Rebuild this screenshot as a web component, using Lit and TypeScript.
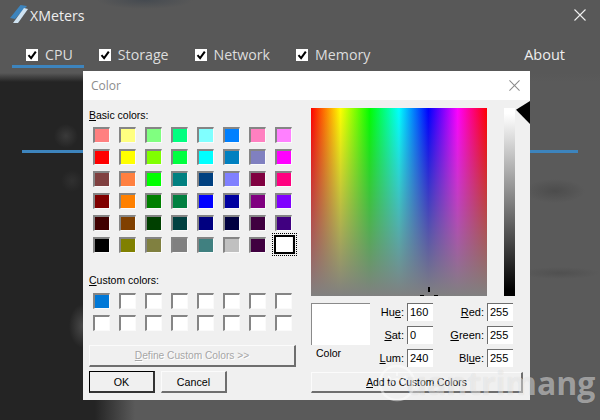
import { LitElement, html, css, svg } from 'lit';
import { customElement } from 'lit/decorators.js';

const TABS = ['CPU', 'Storage', 'Network', 'Memory'];

const BASIC = [
  '#ff8080', '#ffff80', '#80ff80', '#00ff80', '#80ffff', '#0080ff', '#ff80c0', '#ff80ff',
  '#ff0000', '#ffff00', '#80ff00', '#00ff40', '#00ffff', '#0080c0', '#8080c0', '#ff00ff',
  '#804040', '#ff8040', '#00ff00', '#008080', '#004080', '#8080ff', '#800040', '#ff0080',
  '#800000', '#ff8000', '#008000', '#008040', '#0000ff', '#0000a0', '#800080', '#8000ff',
  '#400000', '#804000', '#004000', '#004040', '#000080', '#000040', '#400040', '#400080',
  '#000000', '#808000', '#808040', '#808080', '#408080', '#c0c0c0', '#400040', '#ffffff'
];

const CUSTOM = ['#0078d7', ...Array(15).fill('#ffffff')];

const closeIcon = (size: number) => html`
  <svg width=${size} height=${size} viewBox="0 0 12 12" fill="none" stroke="currentColor" stroke-width="1.1">
    <path d="M.5.5l11 11M11.5.5l-11 11"></path>
  </svg>
`;

const tick = svg`<path d="M2.5 6.2l2.6 3L9.8 2.6" fill="none" stroke="#000" stroke-width="2"></path>`;

@customElement('app-root')
export class AppRoot extends LitElement {
  static styles = css`
    :host {
      display: flex;
      flex-direction: column;
      position: relative;
      width: 600px;
      height: 420px;
      overflow: hidden;
      background: #585858;
      font-family: "Open Sans", sans-serif;
      color: #e8e8e8;
    }
    .titlebar {
      display: flex;
      align-items: center;
      height: 33px;
      padding: 0 14px 3px 10px;
      box-sizing: border-box;
      background: radial-gradient(ellipse 48px 9px at 145px 0, #454a50, transparent);
    }
    .logo {
      width: 19px;
      height: 20px;
      margin-right: 1px;
    }
    .appname {
      font-size: 14.2px;
      flex: 1;
      color: #eeeeee;
    }
    .close {
      display: flex;
      color: #f0f0f0;
    }
    .tabs {
      display: flex;
      align-items: flex-start;
      gap: 1px;
      height: 40px;
      padding: 0 35px 0 12px;
    }
    .tab {
      display: flex;
      align-items: center;
      gap: 7px;
      height: 21px;
      padding: 11px 11px 0 14px;
      font-size: 14.2px;
      color: #dddddd;
      border-bottom: 3px solid transparent;
    }
    .tab.active {
      border-bottom-color: #3d84bd;
    }
    .check {
      width: 12px;
      height: 12px;
      background: #fff;
      flex: none;
    }
    .about {
      margin-left: auto;
      padding-top: 11px;
      line-height: 21px;
      font-size: 14.5px;
      color: #eeeeee;
    }
    .content {
      flex: 1;
      padding: 77px 22px 0;
      background:
        linear-gradient(to bottom, #585858, rgba(88, 88, 88, 0) 9px),
        radial-gradient(circle 12px at 66px 63px, #3a3a3a, transparent),
        radial-gradient(circle 11px at 72px 108px, #303030, transparent),
        radial-gradient(ellipse 14px 22px at 83px 253px, #4a4a4a, transparent),
        radial-gradient(ellipse 30px 12px at 555px 118px, #4c4c4c, transparent),
        radial-gradient(ellipse 40px 6px at 560px 200px, #505050, transparent),
        linear-gradient(to right, #242424 95px, #5a5a5a 135px);
    }
    .meter {
      height: 3px;
      background: #3d84bd;
    }
    .dialog {
      position: absolute;
      left: 83px;
      top: 71px;
      width: 447px;
      height: 329px;
      display: flex;
      flex-direction: column;
      background: #f0f0f0;
      color: #000;
      font-family: "Liberation Sans", Arial, sans-serif;
      font-size: 10.5px;
    }
    .dlg-title {
      display: flex;
      align-items: center;
      justify-content: space-between;
      flex: none;
      height: 29px;
      padding: 0 10px 0 8px;
      background: #fff;
      font-family: "Open Sans", sans-serif;
      font-size: 12px;
      color: #8c8c8c;
    }
    .dlg-title .x {
      display: flex;
      color: #8a8a8a;
    }
    .dlg-body {
      position: relative;
      flex: 1;
      display: flex;
      gap: 15px;
      padding: 8px 6px 0;
    }
    .left {
      width: 207px;
      display: flex;
      flex-direction: column;
    }
    .label {
      line-height: 14px;
      margin-bottom: 5px;
    }
    .label.second {
      margin-top: 20px;
      margin-bottom: 6px;
    }
    u {
      text-underline-offset: 1px;
    }
    .swatches {
      display: grid;
      grid-template-columns: repeat(8, 17px);
      grid-auto-rows: 16px;
      column-gap: 9px;
      row-gap: 6px;
      padding-left: 4px;
    }
    .swatch {
      position: relative;
      box-sizing: border-box;
      border-top: 2px solid #858585;
      border-left: 2px solid #858585;
      border-right: 1px solid #fafafa;
      border-bottom: 1px solid #fafafa;
    }
    .swatch.picked {
      border: 0;
    }
    .swatch.picked::before {
      content: '';
      position: absolute;
      inset: -2px -3px -1px -1px;
      border: 2px solid #000;
    }
    .swatch.picked::after {
      content: '';
      position: absolute;
      inset: -4px -5px -3px -3px;
      border: 1px dotted #000;
    }
    .btn {
      display: flex;
      align-items: center;
      justify-content: center;
      box-sizing: border-box;
      height: 22px;
      border-top: 1px solid #fbfbfb;
      border-left: 1px solid #fbfbfb;
      border-right: 2px solid #6e6e6e;
      border-bottom: 2px solid #6e6e6e;
      font-size: 10.7px;
    }
    .btn.define {
      margin-top: 14px;
      color: #a6a6a6;
      text-shadow: 1px 1px 0 #fff;
      font-size: 10.2px;
    }
    .row {
      display: flex;
      gap: 6px;
      margin-top: 4px;
    }
    .row .btn {
      width: 66px;
    }
    .btn.default {
      border: 1px solid #000;
      border-right: 2px solid #333;
      border-bottom: 2px solid #333;
    }
    .right {
      width: 212px;
      display: flex;
      flex-direction: column;
    }
    .picker {
      display: flex;
      gap: 17px;
      height: 188px;
    }
    .spectrum {
      position: relative;
      width: 176px;
      background:
        linear-gradient(to bottom, rgba(128, 128, 128, 0), #808080),
        linear-gradient(to right, #f00, #ff0, #0f0, #0ff, #00f, #f0f, #f00);
    }
    .cross {
      position: absolute;
      background: #000;
    }
    .cross.v {
      left: 117px;
      top: 179px;
      width: 2px;
      height: 5px;
    }
    .cross.l {
      left: 109px;
      top: 187px;
      width: 4px;
      height: 1px;
    }
    .cross.r {
      left: 123px;
      top: 187px;
      width: 4px;
      height: 1px;
    }
    .lum {
      width: 11px;
      background: linear-gradient(to bottom, #fff 3%, #808080 50%, #000 97%);
    }
    .arrow {
      position: absolute;
      right: 0;
      top: 1px;
      width: 14px;
      height: 23px;
      background: #000;
      clip-path: polygon(0 38%, 100% 0, 100% 100%);
    }
    .controls {
      display: flex;
      margin-top: 7px;
      height: 64px;
    }
    .preview-col {
      width: 59px;
    }
    .preview {
      height: 42px;
      box-sizing: border-box;
      background: #fff;
      border-top: 1px solid #8a8a8a;
      border-left: 1px solid #8a8a8a;
    }
    .preview-label {
      margin: 1px 0 0 5px;
      line-height: 14px;
      font-size: 10.5px;
    }
    .fields {
      display: grid;
      grid-template-columns: 37px 26px 54px 26px;
      grid-auto-rows: 18px;
      row-gap: 5px;
    }
    .fields label {
      text-align: right;
      padding-right: 3px;
      line-height: 18px;
      font-size: 11px;
    }
    .val {
      box-sizing: border-box;
      background: #fff;
      border-top: 1px solid #6e6e6e;
      border-left: 1px solid #6e6e6e;
      padding-left: 2px;
      line-height: 17px;
      font-size: 11px;
    }
    .btn.add {
      margin-top: 5px;
      height: 21px;
      font-size: 10.3px;
    }
    .watermark {
      position: absolute;
      left: 377px;
      top: 363px;
      display: flex;
      align-items: flex-end;
      pointer-events: none;
      color: rgba(255, 255, 255, 0.45);
      font-family: "Open Sans", sans-serif;
      font-weight: 700;
      font-size: 32px;
      line-height: 40px;
      text-shadow: 0 0 1px rgba(0, 0, 0, 0.1);
    }
    .watermark svg {
      width: 40px;
      height: 40px;
      margin-top: -3px;
    }
    .watermark span {
      margin-left: -11px;
    }
  `;

  renderField(name: string, under: number, value: string) {
    return html`
      <label>${name.slice(0, under)}<u>${name[under]}</u>${name.slice(under + 1)}:</label>
      <span class="val">${value}</span>
    `;
  }

  render() {
    return html`
      <div class="titlebar">
        <svg class="logo" viewBox="0 0 19 20">
          <path d="M0 13L10.5 0 17 1 5 14z" fill="#3d84bd"></path>
          <path d="M3 18h5L18 4l-4-1z" fill="#cfe3f2"></path>
        </svg>
        <span class="appname">XMeters</span>
        <span class="close">${closeIcon(12)}</span>
      </div>
      <div class="tabs">
        ${TABS.map((t, i) => html`
          <div class="tab ${i === 0 ? 'active' : ''}">
            <svg class="check" viewBox="0 0 12 12">${tick}</svg>
            <span>${t}</span>
          </div>
        `)}
        <span class="about">About</span>
      </div>
      <div class="content">
        <div class="meter"></div>
      </div>

      <div class="dialog">
        <div class="dlg-title">
          <span>Color</span>
          <span class="x">${closeIcon(11)}</span>
        </div>
        <div class="dlg-body">
          <div class="left">
            <div class="label"><u>B</u>asic colors:</div>
            <div class="swatches">
              ${BASIC.map((c, i) => html`
                <div class="swatch ${i === 47 ? 'picked' : ''}" style="background:${c}"></div>
              `)}
            </div>
            <div class="label second"><u>C</u>ustom colors:</div>
            <div class="swatches">
              ${CUSTOM.map(c => html`<div class="swatch" style="background:${c}"></div>`)}
            </div>
            <div class="btn define"><span><u>D</u>efine Custom Colors &gt;&gt;</span></div>
            <div class="row">
              <div class="btn default">OK</div>
              <div class="btn">Cancel</div>
            </div>
          </div>
          <div class="right">
            <div class="picker">
              <div class="spectrum">
                <i class="cross v"></i>
                <i class="cross l"></i>
                <i class="cross r"></i>
              </div>
              <div class="lum"></div>
            </div>
            <div class="controls">
              <div class="preview-col">
                <div class="preview"></div>
                <div class="preview-label">Color</div>
              </div>
              <div class="fields">
                ${this.renderField('Hue', 2, '160')}
                ${this.renderField('Red', 0, '255')}
                ${this.renderField('Sat', 0, '0')}
                ${this.renderField('Green', 0, '255')}
                ${this.renderField('Lum', 0, '240')}
                ${this.renderField('Blue', 2, '255')}
              </div>
            </div>
            <div class="btn add"><span><u>A</u>dd to Custom Colors</span></div>
          </div>
          <div class="arrow"></div>
        </div>
      </div>

      <div class="watermark">
        <svg viewBox="0 0 40 40" fill="none" stroke="currentColor" stroke-width="2.5">
          <circle cx="20" cy="20" r="17"></circle>
          <path d="M20 9v4M11 13l3 3M29 13l-3 3M12 24a8 8 0 0 1 16 0" stroke-width="2"></path>
        </svg>
        <span>uantrimang</span>
      </div>
    `;
  }
}
